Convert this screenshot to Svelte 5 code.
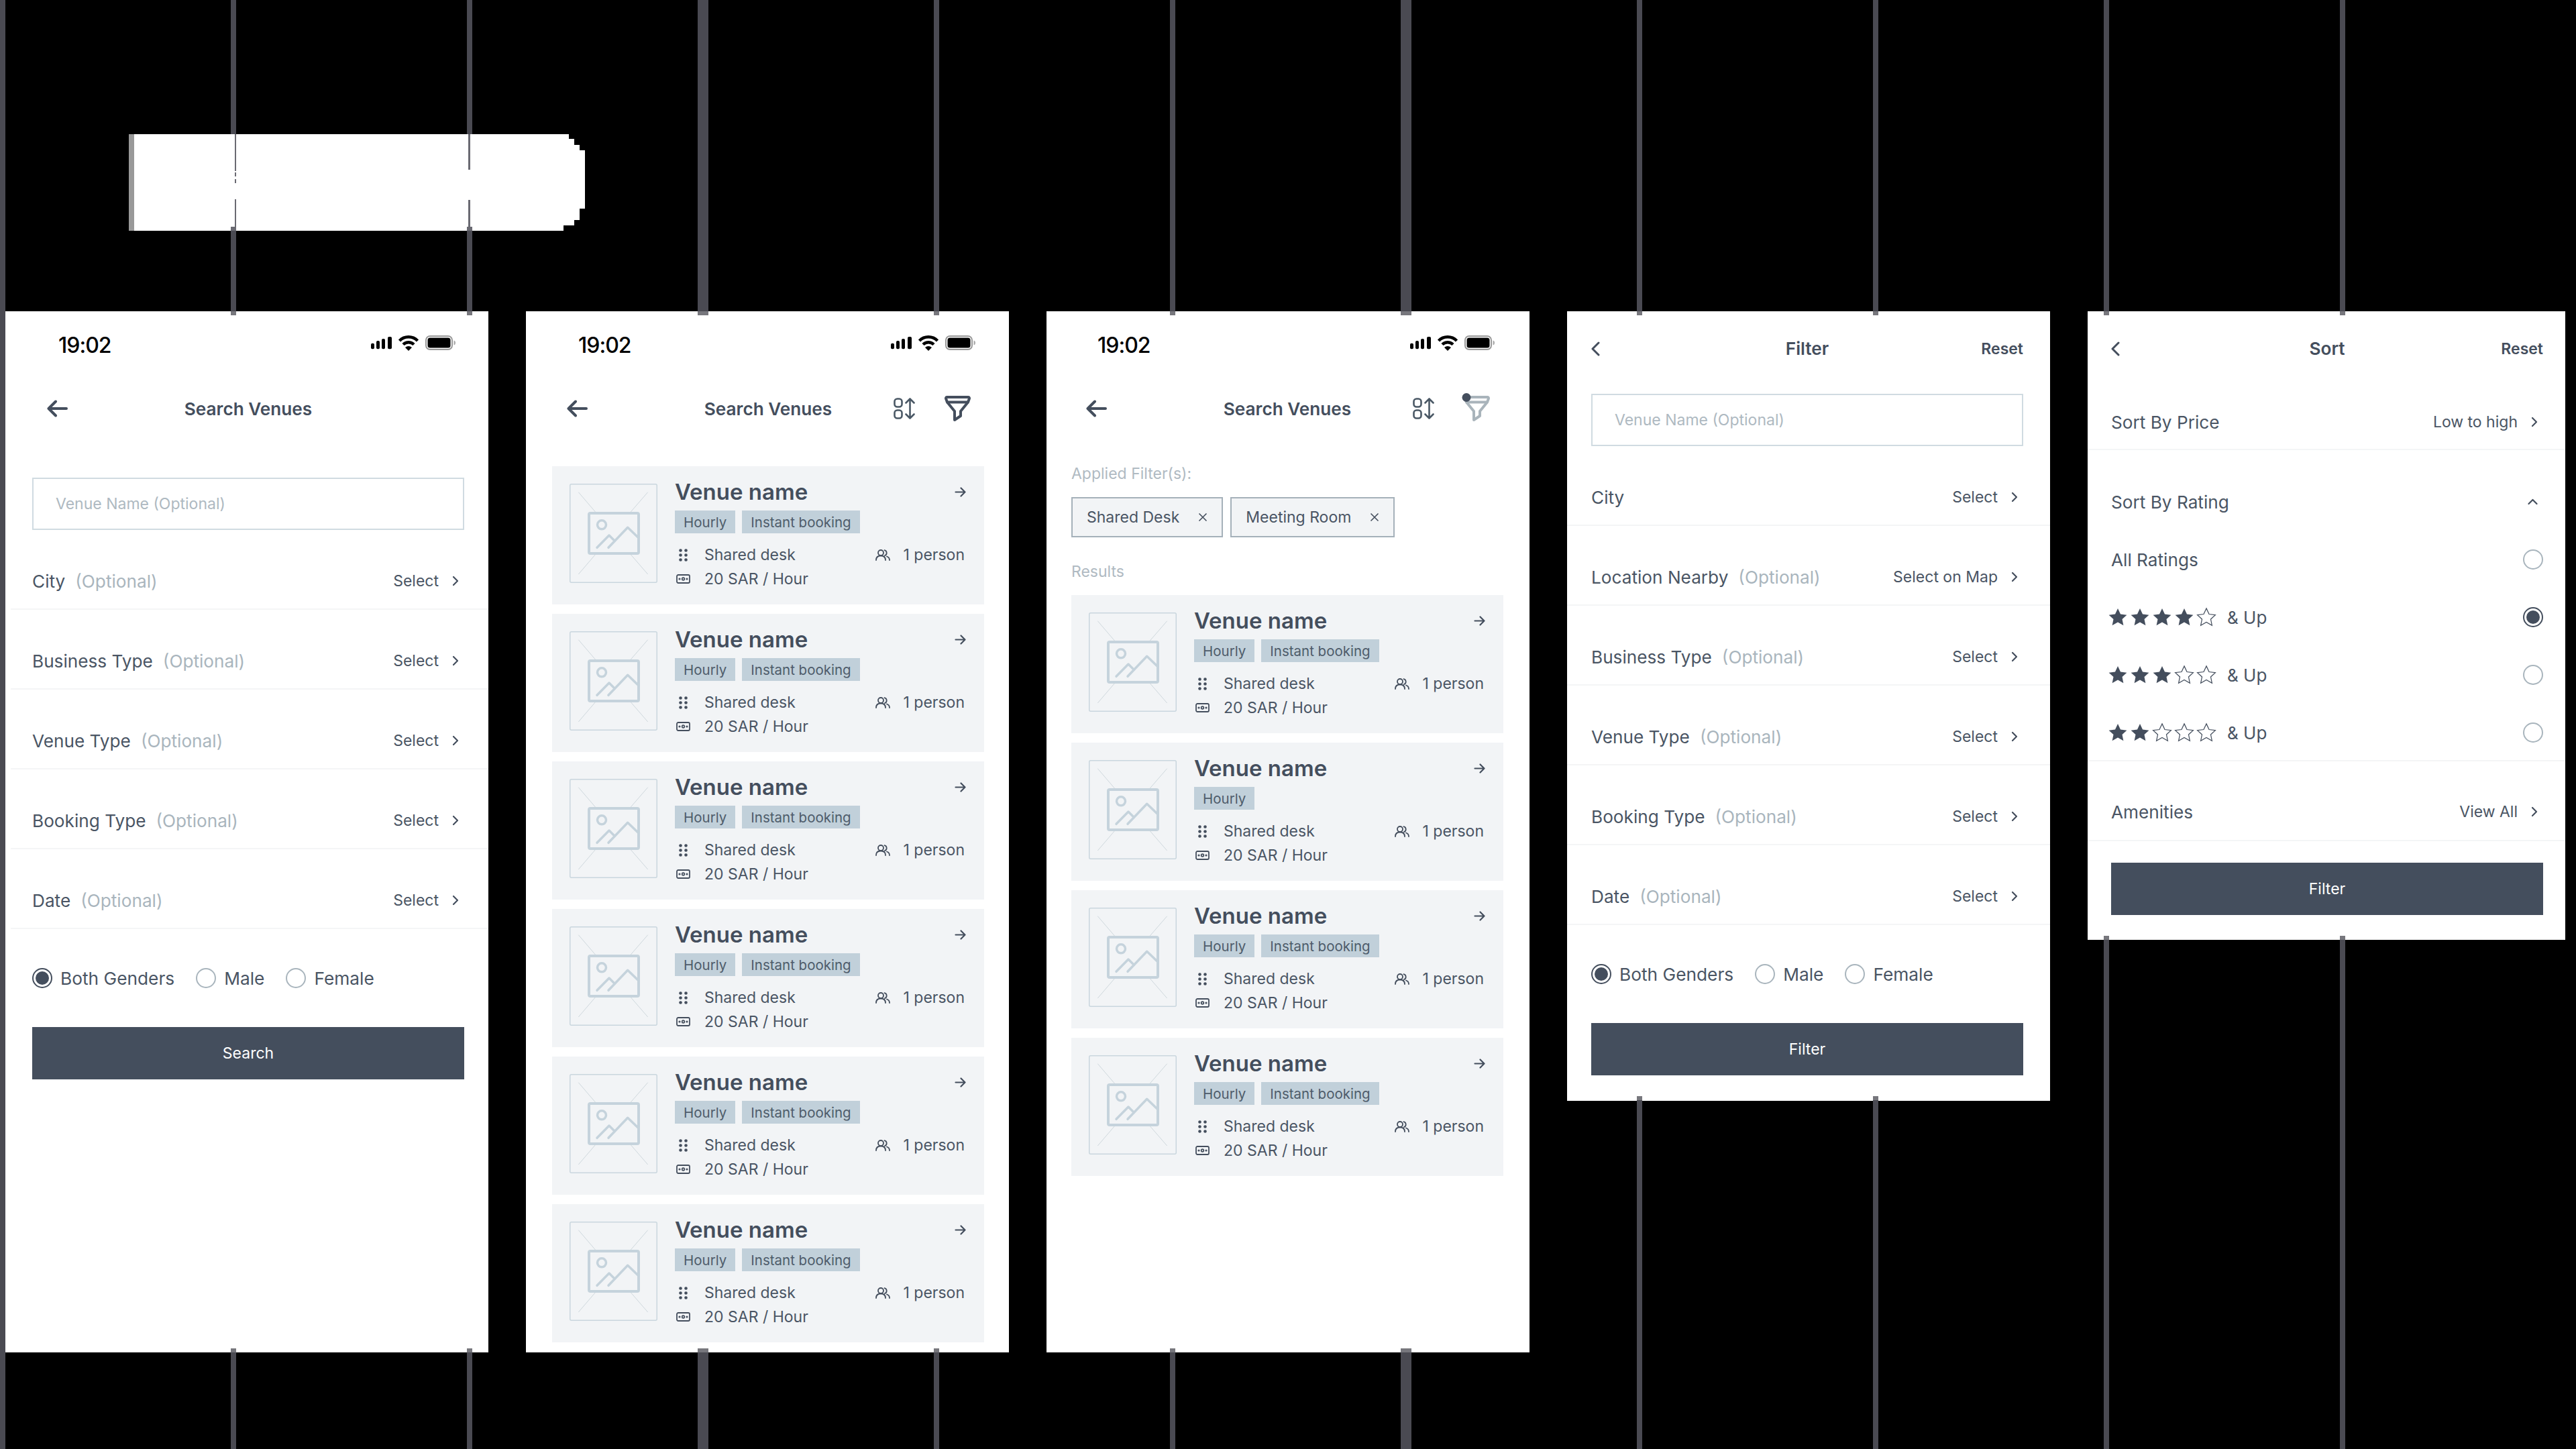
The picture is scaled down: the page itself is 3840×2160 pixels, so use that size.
<script>
	// bars behind the screens: x, width, y where the screen below them ends
	const lines = [
		{ x: 344, w: 8, end: 2016 },
		{ x: 696, w: 8, end: 2016 },
		{ x: 1040, w: 16, end: 2016 },
		{ x: 1392, w: 8, end: 2016 },
		{ x: 1744, w: 8, end: 2016 },
		{ x: 2088, w: 16, end: 2016 },
		{ x: 2440, w: 8, end: 1640 },
		{ x: 2792, w: 8, end: 1640 },
		{ x: 3136, w: 8, end: 1401 },
		{ x: 3488, w: 8, end: 1401 }
	];

	// bits of those bars that show through the white block
	const nicks = [
		{ x: 158, y: 0, w: 2, h: 55 },
		{ x: 158, y: 57, w: 2, h: 6 },
		{ x: 158, y: 67, w: 2, h: 6 },
		{ x: 158, y: 97, w: 2, h: 41 },
		{ x: 152, y: 138, w: 8, h: 6 },
		{ x: 506, y: 0, w: 3, h: 53 },
		{ x: 506, y: 98, w: 3, h: 40 },
		{ x: 504, y: 138, w: 8, h: 6 }
	];

	const searchRows = [
		{ label: 'City', opt: true },
		{ label: 'Business Type', opt: true },
		{ label: 'Venue Type', opt: true },
		{ label: 'Booking Type', opt: true },
		{ label: 'Date', opt: true }
	];

	const filterRows = [
		{ label: 'City', opt: false },
		{ label: 'Location Nearby', opt: true, value: 'Select on Map' },
		{ label: 'Business Type', opt: true },
		{ label: 'Venue Type', opt: true },
		{ label: 'Booking Type', opt: true },
		{ label: 'Date', opt: true }
	];

	const venues = [
		{ instant: true },
		{ instant: true },
		{ instant: true },
		{ instant: true },
		{ instant: true },
		{ instant: true }
	];

	const filtered = [{ instant: true }, { instant: false }, { instant: true }, { instant: true }];

	const ratings = [4, 3, 2];
</script>

{#snippet statusBar()}
	<div class="status">
		<span class="time">19:02</span>
		<svg class="status-icons" width="126" height="24" viewBox="0 0 126 24">
			<rect x="0" y="11.7" width="5" height="8.6" rx="2" />
			<rect x="8" y="8" width="5" height="12.3" rx="2" />
			<rect x="16" y="5" width="5" height="15.3" rx="2" />
			<rect x="25" y="2" width="6" height="18.3" rx="2" />
			<path d="M42.500 8A19 19 0 0 1 69.500 8" fill="none" stroke="#000" stroke-width="4.500" />
			<path d="M48 13.500A11.500 11.500 0 0 1 64 13.500" fill="none" stroke="#000" stroke-width="4.500" />
			<path d="M51 18A7.500 7.500 0 0 1 61 18L56 23Z" />
			<rect x="82" y="1" width="39" height="20" rx="6" fill="none" stroke="#999" stroke-width="2" />
			<rect x="84.500" y="3.500" width="34" height="15" rx="3.500" />
			<path d="M123.500 7.500C125.500 8 126 9.500 126 11S125.500 14 123.500 14.500Z" fill="#aaa" />
		</svg>
	</div>
{/snippet}

{#snippet backArrow()}
	<svg class="back" width="31" height="26" viewBox="0 0 31 26" fill="none" stroke="#444e5d" stroke-width="4" stroke-linecap="round" stroke-linejoin="round">
		<path d="M29 13H3M13 2.500 2.500 13l10.500 10.500" />
	</svg>
{/snippet}

{#snippet backChevron()}
	<svg width="13" height="22" viewBox="0 0 13 22" fill="none" stroke="#444e5d" stroke-width="3" stroke-linecap="round" stroke-linejoin="round">
		<path d="M11 2 2 11l9 9" />
	</svg>
{/snippet}

{#snippet sortIcon()}
	<svg width="32" height="32" viewBox="0 0 32 32" fill="none" stroke="#4a5865" stroke-width="2.600" stroke-linecap="round" stroke-linejoin="round">
		<rect x="1.500" y="1.500" width="11" height="12" rx="4" />
		<rect x="1.500" y="18.500" width="11" height="12" rx="4" />
		<path d="M24.500 1.500v29M18.500 7.500l6-6 6 6M18.500 24.500l6 6 6-6" />
	</svg>
{/snippet}

{#snippet filterIcon(dot)}
	<svg class="filter-icon" width="39" height="38" viewBox="0 0 39 38" fill="none" stroke={dot ? '#a9b4bb' : '#444e5d'} stroke-width="4" stroke-linejoin="round">
		<path d="M3.500 2h32c1.500 0 1.800 1.500 1.300 2.500L35 9.500H4L2.200 4.500C1.700 3.500 2 2 3.500 2Z" />
		<path d="M4 9.500 15 23v13l9-6v-7L35 9.500" />
		{#if dot}
			<circle cx="4" cy="2.500" r="6.500" fill="#444e5d" stroke="none" />
		{/if}
	</svg>
{/snippet}

{#snippet chevronRight()}
	<svg width="10" height="16" viewBox="0 0 10 16" fill="none" stroke="#444e5d" stroke-width="2.200" stroke-linecap="round" stroke-linejoin="round">
		<path d="m2 2 6 6-6 6" />
	</svg>
{/snippet}

{#snippet row(item)}
	<div class="row">
		<span class="label">{item.label}</span>
		{#if item.opt}<span class="opt">(Optional)</span>{/if}
		<span class="value">{item.value ?? 'Select'}</span>
		{@render chevronRight()}
	</div>
{/snippet}

{#snippet genderRadios()}
	<div class="genders">
		<span class="radio on"></span><span class="gender first">Both Genders</span>
		<span class="radio"></span><span class="gender">Male</span>
		<span class="radio"></span><span class="gender">Female</span>
	</div>
{/snippet}

{#snippet venueCard(v)}
	<article class="card">
		<svg class="thumb" width="131" height="148" viewBox="0 0 131 148" fill="none">
			<rect x="0.750" y="0.750" width="129.500" height="146.500" rx="2" stroke="#c9d6de" stroke-width="1.500" />
			<path d="M13.300 12.700 39 42.700M116.700 12.700 90.700 42.700M13.300 135 39 105M116.700 135 90.700 105" stroke="#cfd8dd" stroke-width="1" />
			<rect x="29" y="44" width="74" height="60" rx="2" stroke="#c5d3dc" stroke-width="4" />
			<circle cx="48" cy="61.300" r="6.500" stroke="#c5d3dc" stroke-width="3.500" />
			<path d="M41 95.300 59 77l8.500 8.500M58 95.300l28.700-30 15.600 15" stroke="#c5d3dc" stroke-width="3.500" stroke-linecap="round" stroke-linejoin="round" />
		</svg>
		<div class="card-body">
			<div class="card-title">
				<h3>Venue name</h3>
				<svg width="17" height="15" viewBox="0 0 17 15" fill="none" stroke="#444e5d" stroke-width="2.200" stroke-linecap="round" stroke-linejoin="round">
					<path d="M1.500 7.500h14M9.500 1.500l6 6-6 6" />
				</svg>
			</div>
			<div class="tags">
				<span class="tag">Hourly</span>
				{#if v.instant}<span class="tag">Instant booking</span>{/if}
			</div>
			<div class="meta">
				<span class="meta-icon">
					<svg width="13" height="19" viewBox="0 0 13 19" fill="#444e5d">
						<circle cx="2.500" cy="2.500" r="2.300" /><circle cx="10.500" cy="2.500" r="2.300" />
						<circle cx="2.500" cy="9.500" r="2.300" /><circle cx="10.500" cy="9.500" r="2.300" />
						<circle cx="2.500" cy="16.500" r="2.300" /><circle cx="10.500" cy="16.500" r="2.300" />
					</svg>
				</span>
				<span>Shared desk</span>
				<svg class="people" width="22" height="17" viewBox="0 0 22 17" fill="none" stroke="#444e5d" stroke-width="1.800" stroke-linecap="round">
					<circle cx="8" cy="5" r="4" />
					<path d="M1 16c0-4.500 3-6.500 7-6.500s7 2 7 6.500M13.500 1.200a4.200 4.200 0 0 1 .5 8M17 10.500c3 1 4 3 4 5.500" />
				</svg>
				<span>1 person</span>
			</div>
			<div class="meta">
				<span class="meta-icon">
					<svg width="21" height="14" viewBox="0 0 21 14" fill="none" stroke="#444e5d" stroke-width="1.800">
						<rect x="1" y="1" width="19" height="12" rx="2" />
						<circle cx="10.500" cy="7" r="1.800" />
						<circle cx="5" cy="7" r="0.700" /><circle cx="16" cy="7" r="0.700" />
					</svg>
				</span>
				<span>20 SAR / Hour</span>
			</div>
		</div>
	</article>
{/snippet}

{#snippet star(filled)}
	<svg width="30" height="30" viewBox="0 0 24 24" fill={filled ? '#444e5d' : 'none'} stroke="#444e5d" stroke-width={filled ? 0 : 1}>
		<path d="M12 1.500l3.200 6.900 7.500.9-5.500 5.100 1.500 7.400L12 18l-6.700 3.800 1.500-7.400L1.300 9.300l7.500-.9z" />
	</svg>
{/snippet}

<div class="stage">
	<i class="bar" style="left: 0; width: 8px; height: 2160px;"></i>
	{#each lines as l}
		<i class="bar tip-top" style="left: {l.x}px; width: {l.w}px;"></i>
		<i class="bar tip-bottom" style="left: {l.x}px; width: {l.w}px; top: {l.end - 6}px;"></i>
	{/each}

	<div class="logo-block">
		{#each nicks as n}
			<i class="nick" style="left: {n.x}px; top: {n.y}px; width: {n.w}px; height: {n.h}px;"></i>
		{/each}
	</div>

	<div class="screens">
		<!-- Search form -->
		<section class="screen tall s1">
			{@render statusBar()}
			<header class="nav">
				{@render backArrow()}
				<h2>Search Venues</h2>
			</header>
			<div class="input top-gap">Venue Name (Optional)</div>
			{#each searchRows as item}
				{@render row(item)}
			{/each}
			{@render genderRadios()}
			<button class="primary">Search</button>
		</section>

		<!-- Results -->
		<section class="screen tall s2">
			{@render statusBar()}
			<header class="nav">
				{@render backArrow()}
				<h2>Search Venues</h2>
				<div class="actions">
					{@render sortIcon()}
					{@render filterIcon(false)}
				</div>
			</header>
			<div class="cards results-gap">
				{#each venues as v}
					{@render venueCard(v)}
				{/each}
			</div>
		</section>

		<!-- Results with filters applied -->
		<section class="screen tall s3">
			{@render statusBar()}
			<header class="nav">
				{@render backArrow()}
				<h2>Search Venues</h2>
				<div class="actions">
					{@render sortIcon()}
					{@render filterIcon(true)}
				</div>
			</header>
			<p class="caption applied">Applied Filter(s):</p>
			<div class="chips">
				<span class="chip">Shared Desk
					<svg width="14" height="14" viewBox="0 0 14 14" stroke="#444e5d" stroke-width="1.600"><path d="m1.500 1.500 11 11M12.500 1.500l-11 11" /></svg>
				</span>
				<span class="chip">Meeting Room
					<svg width="14" height="14" viewBox="0 0 14 14" stroke="#444e5d" stroke-width="1.600"><path d="m1.500 1.500 11 11M12.500 1.500l-11 11" /></svg>
				</span>
			</div>
			<p class="caption results">Results</p>
			<div class="cards">
				{#each filtered as v}
					{@render venueCard(v)}
				{/each}
			</div>
		</section>

		<!-- Filter sheet -->
		<section class="screen s4">
			<header class="nav sheet">
				{@render backChevron()}
				<h2>Filter</h2>
				<span class="reset">Reset</span>
			</header>
			<div class="input sheet-gap">Venue Name (Optional)</div>
			{#each filterRows as item}
				{@render row(item)}
			{/each}
			{@render genderRadios()}
			<button class="primary">Filter</button>
		</section>

		<!-- Sort sheet -->
		<section class="screen s5">
			<header class="nav sheet">
				{@render backChevron()}
				<h2>Sort</h2>
				<span class="reset">Reset</span>
			</header>
			<div class="row price">
				<span class="label">Sort By Price</span>
				<span class="value">Low to high</span>
				{@render chevronRight()}
			</div>
			<div class="rating-group">
				<div class="rating-row">
					<span class="label">Sort By Rating</span>
					<svg class="up" width="15" height="10" viewBox="0 0 15 10" fill="none" stroke="#444e5d" stroke-width="2.200" stroke-linecap="round" stroke-linejoin="round">
						<path d="m1.500 8 6-6 6 6" />
					</svg>
				</div>
				<div class="rating-row">
					<span class="label">All Ratings</span>
					<span class="radio"></span>
				</div>
				{#each ratings as r}
					<div class="rating-row">
						<span class="stars">
							{#each [1, 2, 3, 4, 5] as n}
								{@render star(n <= r)}
							{/each}
						</span>
						<span class="and-up">&amp; Up</span>
						<span class="radio" class:on={r === 4}></span>
					</div>
				{/each}
			</div>
			<div class="row amenities">
				<span class="label">Amenities</span>
				<span class="value">View All</span>
				{@render chevronRight()}
			</div>
			<button class="primary sort-btn">Filter</button>
		</section>
	</div>
</div>

<style>
	:global(body) {
		background: #000;
		font-family: Inter, 'Liberation Sans', sans-serif;
	}

	.stage {
		position: relative;
		width: 3840px;
		height: 2160px;
		overflow: hidden;
		background: #000;
	}

	.bar {
		position: absolute;
		top: 0;
		background: #4a4a52;
		z-index: 2;
	}

	.tip-top {
		height: 470px;
		background: linear-gradient(#4a4a52 464px, #77777d 464px);
	}

	.tip-bottom {
		bottom: 0;
		background: linear-gradient(#77777d 6px, #4a4a52 6px);
	}

	.logo-block {
		position: relative;
		z-index: 3;
		box-sizing: border-box;
		margin: 200px 0 120px 192px;
		width: 680px;
		height: 144px;
		background: linear-gradient(90deg, #999 8px, #fff 8px);
		clip-path: polygon(
			0 0, 656px 0, 656px 7px, 664px 7px, 664px 16px, 672px 16px, 672px 24px, 680px 24px,
			680px 111px, 672px 111px, 672px 128px, 664px 128px, 664px 136px, 648px 136px, 648px 144px, 0 144px
		);
	}

	.nick {
		position: absolute;
		background: #6a6a72;
	}

	.screens {
		display: flex;
		align-items: flex-start;
		gap: 56px;
		padding-left: 8px;
	}

	.screen {
		--inset: 40px;
		--rule: 8px;
		box-sizing: border-box;
		flex: none;
		width: 720px;
		padding-left: var(--inset);
		background: #fff;
		color: #444e5d;
		overflow: hidden;
	}

	.screen > * {
		width: 644px;
		box-sizing: border-box;
	}

	.tall {
		height: 1552px;
	}

	.s2 {
		--inset: 39px;
	}

	.s3 {
		--inset: 37px;
	}

	.s4 {
		--inset: 36px;
		--rule: 0px;
		padding-bottom: 38px;
	}

	.s5 {
		--inset: 35px;
		--rule: 0px;
		width: 712px;
		padding-bottom: 37px;
	}

	.status {
		display: flex;
		align-items: center;
		height: 100px;
		padding-left: 39px;
	}

	.time {
		font-size: 32px;
		font-weight: 500;
		letter-spacing: -1px;
		color: #000;
	}

	.status-icons {
		margin-left: auto;
		margin-right: 13px;
		margin-top: -4px;
	}

	.nav {
		display: grid;
		grid-template-columns: 1fr auto 1fr;
		align-items: center;
		height: 90px;
	}

	.nav.sheet {
		height: 111px;
	}

	.nav h2 {
		grid-column: 2;
		margin: 0;
		font-size: 26.200px;
		font-weight: 600;
		color: #444e5d;
	}

	.back {
		grid-column: 1;
		grid-row: 1;
		margin-left: 22px;
	}

	.nav svg:not(.back) {
		grid-column: 1;
		grid-row: 1;
	}

	.actions {
		grid-column: 3;
		grid-row: 1;
		display: flex;
		align-items: center;
		justify-content: flex-end;
		gap: 44px;
		padding-right: 20px;
	}

	.reset {
		grid-column: 3;
		grid-row: 1;
		justify-self: end;
		font-size: 23px;
		font-weight: 600;
	}

	.filter-icon {
		overflow: visible;
	}

	.input {
		display: flex;
		align-items: center;
		height: 78px;
		padding-left: 33px;
		border: 2px solid #d0dbe1;
		font-size: 23px;
		color: #aeb9c1;
	}

	.top-gap {
		margin-top: 58px;
	}

	.sheet-gap {
		margin-top: 12px;
	}

	.row {
		position: relative;
		display: flex;
		align-items: center;
		height: 119px;
		padding: 62px 8px 29px 0;
		box-sizing: border-box;
	}

	.row::after,
	.rating-group::after {
		content: '';
		position: absolute;
		left: calc(var(--rule) - var(--inset));
		right: -100px;
		bottom: 0;
		height: 2px;
		background: #f4f5f6;
	}

	.label {
		font-size: 26.200px;
		color: #4a5564;
	}

	.opt {
		margin-left: 15px;
		font-size: 26.200px;
		color: #a9b5bd;
	}

	.value {
		margin-left: auto;
		margin-right: 20px;
		font-size: 23px;
		color: #4a5564;
	}

	.genders {
		display: flex;
		align-items: center;
		height: 30px;
		margin-top: 58px;
	}

	.radio {
		flex: none;
		box-sizing: border-box;
		width: 30px;
		height: 30px;
		border: 2px solid #a9b5bd;
		border-radius: 50%;
		background: #fff;
	}

	.radio.on {
		border-color: #444e5d;
		padding: 3px;
		background: #444e5d content-box;
	}

	.gender {
		margin: 0 32px 0 12px;
		font-size: 26.300px;
		color: #4a5564;
	}

	.primary {
		display: block;
		height: 78px;
		margin-top: 58px;
		border: 0;
		background: #444e5d;
		color: #fff;
		font: 400 23px Inter, 'Liberation Sans', sans-serif;
	}

	.cards {
		display: flex;
		flex-direction: column;
		gap: 14px;
	}

	.results-gap {
		margin-top: 41px;
	}

	.card {
		display: flex;
		align-items: flex-start;
		height: 206px;
		background: #f2f4f6;
	}

	.thumb {
		flex: none;
		margin: 26px 0 0 26px;
	}

	.card-body {
		flex: 1;
		min-width: 0;
		margin-left: 26px;
		padding: 18px 27px 0 0;
	}

	.card-title {
		display: flex;
		align-items: center;
		justify-content: space-between;
		height: 40px;
	}

	.card-title h3 {
		margin: 0;
		font-size: 33px;
		font-weight: 600;
		color: #444e5d;
	}

	.tags {
		display: flex;
		gap: 10px;
		margin: 8px 0 14px;
	}

	.tag {
		display: flex;
		align-items: center;
		height: 34px;
		padding: 0 13px;
		background: #c1d0da;
		font-size: 20.500px;
		color: #4e5c6b;
	}

	.meta {
		display: flex;
		align-items: center;
		height: 36px;
		padding-right: 2px;
		font-size: 23px;
		color: #4a5564;
	}

	.meta-icon {
		display: flex;
		justify-content: center;
		width: 24px;
		margin-right: 20px;
	}

	.people {
		margin-left: auto;
		margin-right: 20px;
	}

	.caption {
		margin: 0;
		height: 30px;
		line-height: 30px;
		font-size: 23px;
		color: #b0bac2;
	}

	.applied {
		margin-top: 37px;
	}

	.results {
		margin: 36px 0 20px;
	}

	.chips {
		display: flex;
		gap: 11px;
		margin-top: 20px;
	}

	.chip {
		display: flex;
		align-items: center;
		gap: 28px;
		height: 60px;
		box-sizing: border-box;
		padding: 0 21px;
		border: 2px solid #a5b1ba;
		background: #f2f4f6;
		font-size: 23px;
		color: #4a5564;
	}

	.price {
		height: 96px;
		padding: 40px 8px 28px 0;
	}

	.rating-group {
		position: relative;
		padding-top: 34px;
	}

	.rating-row {
		display: flex;
		align-items: center;
		justify-content: space-between;
		height: 86px;
	}

	.stars {
		display: flex;
		gap: 3px;
		margin-left: -5px;
	}

	.and-up {
		margin: 0 auto 0 16px;
		font-size: 26px;
		color: #4a5564;
	}

	.up {
		margin-right: 8px;
	}

	.amenities {
		height: 119px;
		padding: 61px 8px 30px 0;
	}

	.sort-btn {
		margin-top: 32px;
	}
</style>
